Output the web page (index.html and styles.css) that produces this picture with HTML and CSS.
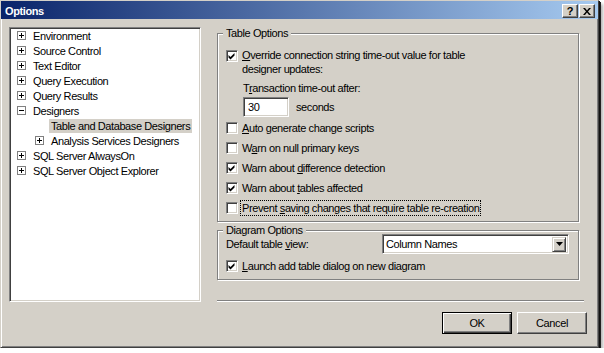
FILE: index.html
```html
<!DOCTYPE html>
<html lang="en">
<head>
  <meta charset="UTF-8" />
  <title>Options</title>
  <link rel="stylesheet" href="styles.css">
</head>
<body>

  <div class="window">
    <div class="titlebar">
      <span class="title">Options</span>
      <div class="caption-btns">
        <span class="cap-btn">?</span>
        <span class="cap-btn">
          <svg width="8" height="7" viewBox="0 0 8 7"><path d="M0 0h2l2 2.5L6 0h2L5 3.5 8 7H6L4 4.5 2 7H0l3-3.5z" fill="#000"/></svg>
        </span>
      </div>
    </div>

    <div class="main">
      <!-- Settings tree -->
      <div class="tree">
        <div class="node"><span class="exp plus"></span><span class="label">Environment</span></div>
        <div class="node"><span class="exp plus"></span><span class="label">Source Control</span></div>
        <div class="node"><span class="exp plus"></span><span class="label">Text Editor</span></div>
        <div class="node"><span class="exp plus"></span><span class="label">Query Execution</span></div>
        <div class="node"><span class="exp plus"></span><span class="label">Query Results</span></div>
        <div class="node"><span class="exp minus"></span><span class="label">Designers</span></div>
        <div class="node child"><span class="spacer"></span><span class="label selected">Table and Database Designers</span></div>
        <div class="node child"><span class="exp plus"></span><span class="label">Analysis Services Designers</span></div>
        <div class="node"><span class="exp plus"></span><span class="label">SQL Server AlwaysOn</span></div>
        <div class="node"><span class="exp plus"></span><span class="label">SQL Server Object Explorer</span></div>
      </div>

      <div class="pane">
        <fieldset class="group table-options">
          <legend>Table Options</legend>
          <div class="check multi">
            <span class="box"><svg width="10" height="10"><polygon points="1.5,4 3.5,6 7.5,2 7.5,4.5 3.5,8.5 1.5,6.5" fill="#000"/></svg></span>
            <span class="text"><u>O</u>verride connection string time-out value for table<br>designer updates:</span>
          </div>
          <div class="timeout-label">T<u>r</u>ansaction time-out after:</div>
          <div class="timeout-row">
            <input class="textbox" type="text" value="30">
            <span>seconds</span>
          </div>
          <div class="check first">
            <span class="box"></span>
            <span class="text"><u>A</u>uto generate change scripts</span>
          </div>
          <div class="check">
            <span class="box"></span>
            <span class="text">W<u>a</u>rn on null primary keys</span>
          </div>
          <div class="check">
            <span class="box"><svg width="10" height="10"><polygon points="1.5,4 3.5,6 7.5,2 7.5,4.5 3.5,8.5 1.5,6.5" fill="#000"/></svg></span>
            <span class="text">Warn about <u>d</u>ifference detection</span>
          </div>
          <div class="check">
            <span class="box"><svg width="10" height="10"><polygon points="1.5,4 3.5,6 7.5,2 7.5,4.5 3.5,8.5 1.5,6.5" fill="#000"/></svg></span>
            <span class="text">Warn about <u>t</u>ables affected</span>
          </div>
          <div class="check">
            <span class="box"></span>
            <span class="text focus">Prevent <u>s</u>aving changes that require table re-creation</span>
          </div>
        </fieldset>

        <fieldset class="group diagram-options">
          <legend>Diagram Options</legend>
          <div class="view-row">
            <span class="view-label">Default table <u>v</u>iew:</span>
            <div class="combo">
              <span>Column Names</span>
              <span class="drop"><svg width="7" height="4"><polygon points="0,0 7,0 3.5,4" fill="#000"/></svg></span>
            </div>
          </div>
          <div class="check launch">
            <span class="box"><svg width="10" height="10"><polygon points="1.5,4 3.5,6 7.5,2 7.5,4.5 3.5,8.5 1.5,6.5" fill="#000"/></svg></span>
            <span class="text"><u>L</u>aunch add table dialog on new diagram</span>
          </div>
        </fieldset>

        <div class="separator"></div>
      </div>
    </div>

    <div class="footer">
      <button class="btn default">OK</button>
      <button class="btn">Cancel</button>
    </div>
  </div>

</body>
</html>
```

FILE: styles.css
```css
* {
  box-sizing: border-box;
}
body {
  margin: 0;
  background: #fff;
  font-family: "Liberation Sans", Arial, sans-serif;
  font-size: 11px;
  letter-spacing: -0.4px;
  color: #000;
}
.window {
  width: 599px;
  height: 348px;
  background: #d4d0c8;
  border: 1px solid;
  border-color: #d4d0c8 #404040 #404040 #d4d0c8;
  box-shadow: inset 1px 1px #fff, inset -1px -1px #808080,
    1px 1px 0 #111, 2px 2px 0 #222, 4px 4px 3px rgba(0, 0, 0, 0.3);
}
.titlebar {
  height: 18px;
  display: flex;
  align-items: center;
  justify-content: space-between;
  padding: 2px 3px 0 4px;
  background: linear-gradient(to right, #0a246a, #a6caf0);
  color: #fff;
  font-weight: bold;
}
.caption-btns {
  display: flex;
  gap: 1px;
}
.cap-btn {
  width: 16px;
  height: 14px;
  display: flex;
  align-items: center;
  justify-content: center;
  background: #d4d0c8;
  border: 1px solid;
  border-color: #fff #404040 #404040 #fff;
  box-shadow: inset -1px -1px #808080;
  color: #000;
  line-height: 12px;
}

/* tree + pane */
.main {
  display: flex;
  margin: 8px 0 0 8px;
}
.tree {
  width: 192px;
  height: 275px;
  padding: 0 0 0 1px;
  background: #fff;
  border: 1px solid;
  border-color: #808080 #fff #fff #808080;
  box-shadow: inset 1px 1px #404040, inset -1px -1px #d4d0c8;
}
.node {
  display: flex;
  align-items: center;
  height: 15px;
  padding-left: 6px;
  white-space: nowrap;
}
.node.child {
  padding-left: 24px;
}
.exp {
  flex: none;
  width: 9px;
  height: 9px;
  margin-right: 5px;
  border: 1px solid #808080;
}
.exp.plus {
  background: linear-gradient(#000, #000) center / 5px 1px no-repeat,
    linear-gradient(#000, #000) center / 1px 5px no-repeat, #fff;
}
.exp.minus {
  background: linear-gradient(#000, #000) center / 5px 1px no-repeat, #fff;
}
.spacer {
  width: 14px;
}
.label {
  padding: 0 2px;
  line-height: 14px;
}
.label.selected {
  background: #d4d0c8;
}

.pane {
  display: flex;
  flex-direction: column;
  width: 367px;
  margin-left: 16px;
}
.group {
  width: 362px;
  margin: 0;
  padding: 8px 0 3px 8px;
  min-inline-size: 0;
  border: 1px solid #808080;
  box-shadow: inset 1px 1px #fff, 1px 1px #fff;
}
.group legend {
  margin-left: -3px;
  padding: 0 3px;
  line-height: 13px;
  background: #d4d0c8;
}
.check {
  display: flex;
  align-items: center;
  height: 20px;
}
.check.multi {
  align-items: flex-start;
  height: auto;
}
.check.multi .box {
  margin-top: 2px;
}
.check.first {
  margin-top: 1px;
}
.box {
  flex: none;
  width: 12px;
  height: 12px;
  background: #fff;
  border: 1px solid;
  border-color: #808080 #fff #fff #808080;
  box-shadow: inset 1px 1px #404040, inset -1px -1px #d4d0c8;
}
.box svg {
  display: block;
}
.check .text {
  margin-left: 3px;
  padding: 0 1px;
  line-height: 14px;
}
.focus {
  outline: 1px dotted #000;
}
.timeout-label {
  margin: 5px 0 0 17px;
  line-height: 14px;
}
.timeout-row {
  display: flex;
  align-items: center;
  gap: 7px;
  margin: 2px 0 0 17px;
}
.textbox {
  width: 46px;
  height: 20px;
  margin: 0;
  padding: 0 0 0 4px;
  font: inherit;
  letter-spacing: inherit;
  background: #fff;
  border: 1px solid;
  border-color: #808080 #fff #fff #808080;
  box-shadow: inset 1px 1px #404040, inset -1px -1px #d4d0c8;
  outline: none;
}

.diagram-options {
  margin-top: 2px;
  padding-top: 0;
}
.view-row {
  display: flex;
  align-items: center;
  height: 20px;
  margin-top: -3px;
}
.view-label {
  width: 156px;
}
.combo {
  width: 187px;
  height: 20px;
  display: flex;
  align-items: center;
  padding: 0 2px 0 3px;
  background: #fff;
  border: 1px solid;
  border-color: #808080 #fff #fff #808080;
  box-shadow: inset 1px 1px #404040, inset -1px -1px #d4d0c8;
}
.drop {
  margin-left: auto;
  width: 14px;
  height: 15px;
  display: flex;
  align-items: center;
  justify-content: center;
  background: #d4d0c8;
  border: 1px solid;
  border-color: #d4d0c8 #404040 #404040 #d4d0c8;
  box-shadow: inset 1px 1px #fff, inset -1px -1px #808080;
}
.drop svg {
  display: block;
}
.check.launch {
  margin-top: 2px;
}

.separator {
  margin-top: auto;
  height: 2px;
  border-top: 1px solid #808080;
  border-bottom: 1px solid #fff;
}

/* dialog buttons */
.footer {
  display: flex;
  justify-content: flex-end;
  gap: 5px;
  margin: 10px 11px 0 0;
}
.btn {
  width: 70px;
  height: 22px;
  padding: 0;
  font: inherit;
  letter-spacing: inherit;
  color: #000;
  background: #d4d0c8;
  border: 1px solid;
  border-color: #fff #404040 #404040 #fff;
  box-shadow: inset -1px -1px #808080, inset 1px 1px #d4d0c8;
}
.btn.default {
  border-color: #000;
  box-shadow: inset 1px 1px #fff, inset -1px -1px #404040, inset -2px -2px #808080;
}
```
